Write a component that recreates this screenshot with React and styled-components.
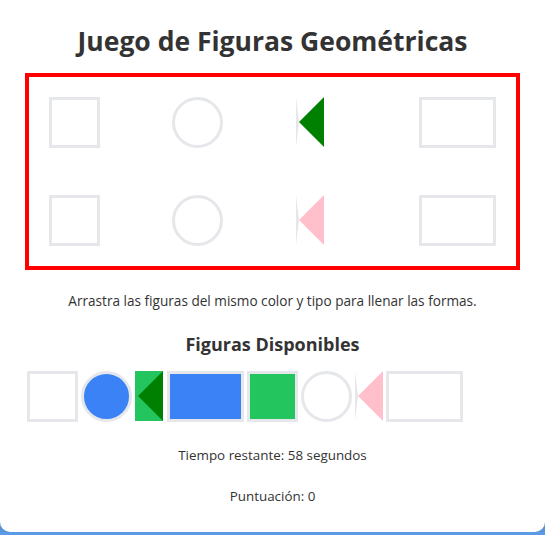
import React from 'react'
import styled, { createGlobalStyle, css } from 'styled-components'

const GlobalStyle = createGlobalStyle`
    body {
        margin: 0;
        background: #5b9be6;
        font-family: "Open Sans", "Noto Sans", sans-serif;
        color: #333;
    }
`

const slots = [
    { id: 1, shape: 'square' },
    { id: 2, shape: 'circle' },
    { id: 3, shape: 'triangle', color: '#008000' },
    { id: 4, shape: 'rect' },
    { id: 5, shape: 'square' },
    { id: 6, shape: 'circle' },
    { id: 7, shape: 'triangle', color: 'pink' },
    { id: 8, shape: 'rect' },
]

const pieces = [
    { id: 1, shape: 'square' },
    { id: 2, shape: 'circle', fill: '#3b82f6' },
    { id: 3, shape: 'triangle', color: '#008000', edge: '#22c55e' },
    { id: 4, shape: 'rect', fill: '#3b82f6' },
    { id: 5, shape: 'square', fill: '#22c55e' },
    { id: 6, shape: 'circle' },
    { id: 7, shape: 'triangle', color: 'pink' },
    { id: 8, shape: 'rect' },
]

const App = () => {
    return <>
        <GlobalStyle />
        <Card>
            <Title>Juego de Figuras Geométricas</Title>

            <Board>
                {slots.map(item => (
                    <Cell key={item.id}>
                        <Shape $shape={item.shape} $color={item.color} />
                    </Cell>
                ))}
            </Board>

            <Hint>Arrastra las figuras del mismo color y tipo para llenar las formas.</Hint>

            <Subtitle>Figuras Disponibles</Subtitle>

            <Tray>
                {pieces.map(item => (
                    <Shape
                        key={item.id}
                        $shape={item.shape}
                        $fill={item.fill}
                        $color={item.color}
                        $edge={item.edge}
                    />
                ))}
            </Tray>

            <Info>Tiempo restante: 58 segundos</Info>
            <Info>Puntuación: 0</Info>
        </Card>
    </>
}

const Card = styled.div`
    background: #fff;
    border-radius: 0 0 10px 10px;
    box-shadow: 0 2px 6px rgba(0, 0, 0, 0.15);
    padding: 22px 25px 28px;
    text-align: center;
`

const Title = styled.h1`
    margin: 0 0 13px;
    font-size: 26.5px;
    line-height: 38px;
    font-weight: 700;
    color: #333;
`

const Board = styled.div`
    border: 4px solid red;
    padding: 20px;
    display: grid;
    grid-template-columns: repeat(4, 123.3px);
    row-gap: 47px;
    justify-items: start;
    overflow: hidden;
`

const Cell = styled.div`
    display: flex;
`

const Shape = styled.div`
    flex: none;
    box-sizing: border-box;
    border: 3px solid #e5e7eb;
    background: ${p => p.$fill || 'transparent'};
    width: 51px;
    height: 51px;

    ${p => p.$shape === 'circle' && css`
        border-radius: 50%;
    `}

    ${p => p.$shape === 'rect' && css`
        width: 77px;
    `}

    ${p => p.$shape === 'triangle' && css`
        width: 0;
        height: 0;
        background: transparent;
        border-style: solid;
        border-width: 25px 25px 25px 3px;
        border-color: ${p.$edge || 'transparent'};
        border-left-color: ${p.$edge || '#e5e7eb'};
        border-right-color: ${p.$color};
    `}
`

const Hint = styled.p`
    margin: 21px 0 0;
    font-size: 13.6px;
    line-height: 20px;
`

const Subtitle = styled.h2`
    margin: 21px 0 15px;
    font-size: 18px;
    line-height: 24px;
    font-weight: 700;
`

const Tray = styled.div`
    display: flex;
    gap: 3.2px;
    padding-left: 2px;
`

const Info = styled.p`
    margin: 25px 0 0;
    font-size: 13.4px;
    line-height: 16px;
`

export default App
